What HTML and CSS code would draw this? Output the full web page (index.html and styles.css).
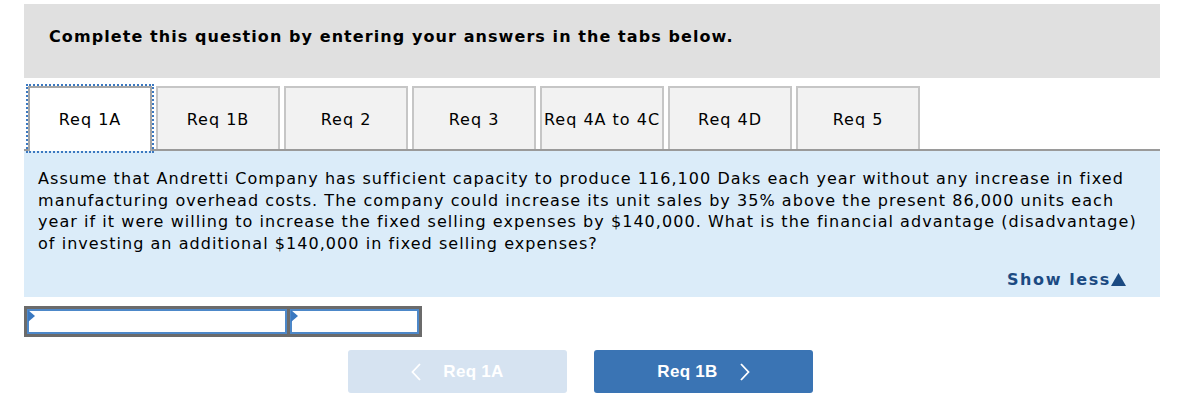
FILE: index.html
```html
<!DOCTYPE html>
<html>
<head>
<meta charset="utf-8">
<link rel="stylesheet" href="styles.css">
</head>
<body>
<div class="wrap">
  <div class="header">
    <h1 class="title">Complete this question by entering your answers in the tabs below.</h1>
  </div>
  <div class="tabs">
    <div class="tab active">Req 1A</div>
    <div class="tab">Req 1B</div>
    <div class="tab">Req 2</div>
    <div class="tab">Req 3</div>
    <div class="tab">Req 4A to 4C</div>
    <div class="tab">Req 4D</div>
    <div class="tab">Req 5</div>
  </div>
  <div class="panel">
    <p class="question">Assume that Andretti Company has sufficient capacity to produce 116,100 Daks each year without any increase in fixed manufacturing overhead costs. The company could increase its unit sales by 35% above the present 86,000 units each year if it were willing to increase the fixed selling expenses by $140,000. What is the financial advantage (disadvantage) of investing an additional $140,000 in fixed selling expenses?</p>
    <div class="show-less"><span>Show less</span><svg class="tri" width="15" height="13" viewBox="0 0 15 13"><polygon points="7.5,0 15,13 0,13" fill="#1b4a82"/></svg></div>
  </div>
  <div class="answer">
    <div class="cell cell-wide"><span class="flag"></span></div>
    <div class="cell cell-narrow"><span class="flag"></span></div>
  </div>
  <div class="nav">
    <button class="btn btn-prev"><svg class="chev" width="10" height="18" viewBox="0 0 10 18"><polyline points="9,1 1.5,9 9,17" fill="none" stroke="#fff" stroke-width="1.8"/></svg><span>Req 1A</span></button>
    <button class="btn btn-next"><span>Req 1B</span><svg class="chev" width="10" height="18" viewBox="0 0 10 18"><polyline points="1,1 8.5,9 1,17" fill="none" stroke="#fff" stroke-width="1.8"/></svg></button>
  </div>
</div>
</body>
</html>
```

FILE: styles.css
```css
* { box-sizing: border-box; }
body {
  margin: 0;
  background: #fff;
  font-family: "DejaVu Sans", Verdana, sans-serif;
  color: #000;
}
.wrap {
  width: 1160px;
  padding: 4px 0 0 24px;
}
.header {
  background: #e0e0e0;
  height: 74px;
  padding: 23px 0 0 25px;
}
.title {
  margin: 0;
  font-size: 16px;
  font-weight: bold;
  line-height: 20px;
  letter-spacing: 1.08px;
}
.tabs {
  display: flex;
  gap: 4px;
  margin-top: 8px;
  padding-left: 4px;
  border-bottom: 2px solid #9a9a9a;
  height: 65px;
  align-items: flex-end;
}
.tab {
  width: 124px;
  height: 63px;
  border: 2px solid #c6c6c6;
  border-bottom: none;
  background: #f2f2f2;
  font-size: 16px;
  letter-spacing: 1px;
  display: flex;
  align-items: center;
  justify-content: center;
  white-space: nowrap;
  padding-top: 2px;
}
.tab.active {
  background: #fff;
  border-color: #a6a6a6;
  height: 65px;
  margin-bottom: -2px;
  outline: 2px dotted #3b78c0;
  padding-top: 0;
}
.panel {
  background: #dbecf9;
  padding: 17px 14px 0 14px;
  height: 146px;
}
.question {
  margin: 0;
  font-size: 16px;
  line-height: 21.7px;
  letter-spacing: 1.05px;
}
.show-less {
  margin-top: 15px;
  padding-right: 20px;
  display: flex;
  justify-content: flex-end;
  align-items: center;
  font-weight: bold;
  font-size: 16px;
  letter-spacing: 1.6px;
  color: #1b4a82;
}
.tri { display: block; margin-left: 0; }
.answer {
  display: flex;
  gap: 3px;
  margin-top: 9px;
  width: 398px;
  height: 31px;
  border: 3px solid #6b6b6b;
  background: #6b6b6b;
}
.cell {
  position: relative;
  background: #fff;
  border: 2px solid #4d88c9;
}
.cell-wide { width: 260px; }
.cell-narrow { flex: 1; }
.flag {
  position: absolute;
  left: -1px;
  top: -1px;
  width: 0;
  height: 0;
  border-top: 6px solid transparent;
  border-bottom: 6px solid transparent;
  border-left: 7px solid #3a78c0;
}
.nav {
  display: flex;
  gap: 27px;
  margin: 13px 0 0 324px;
}
.btn {
  width: 219px;
  height: 43px;
  border: none;
  border-radius: 3px;
  color: #fff;
  font-family: "Liberation Sans", Arial, sans-serif;
  font-weight: bold;
  font-size: 17px;
  letter-spacing: 0.3px;
  display: flex;
  align-items: center;
  justify-content: center;
  gap: 22px;
  padding: 0;
}
.btn-prev { background: #d6e3f1; }
.btn-next { background: #3a74b4; }
.chev { display: block; }
```
